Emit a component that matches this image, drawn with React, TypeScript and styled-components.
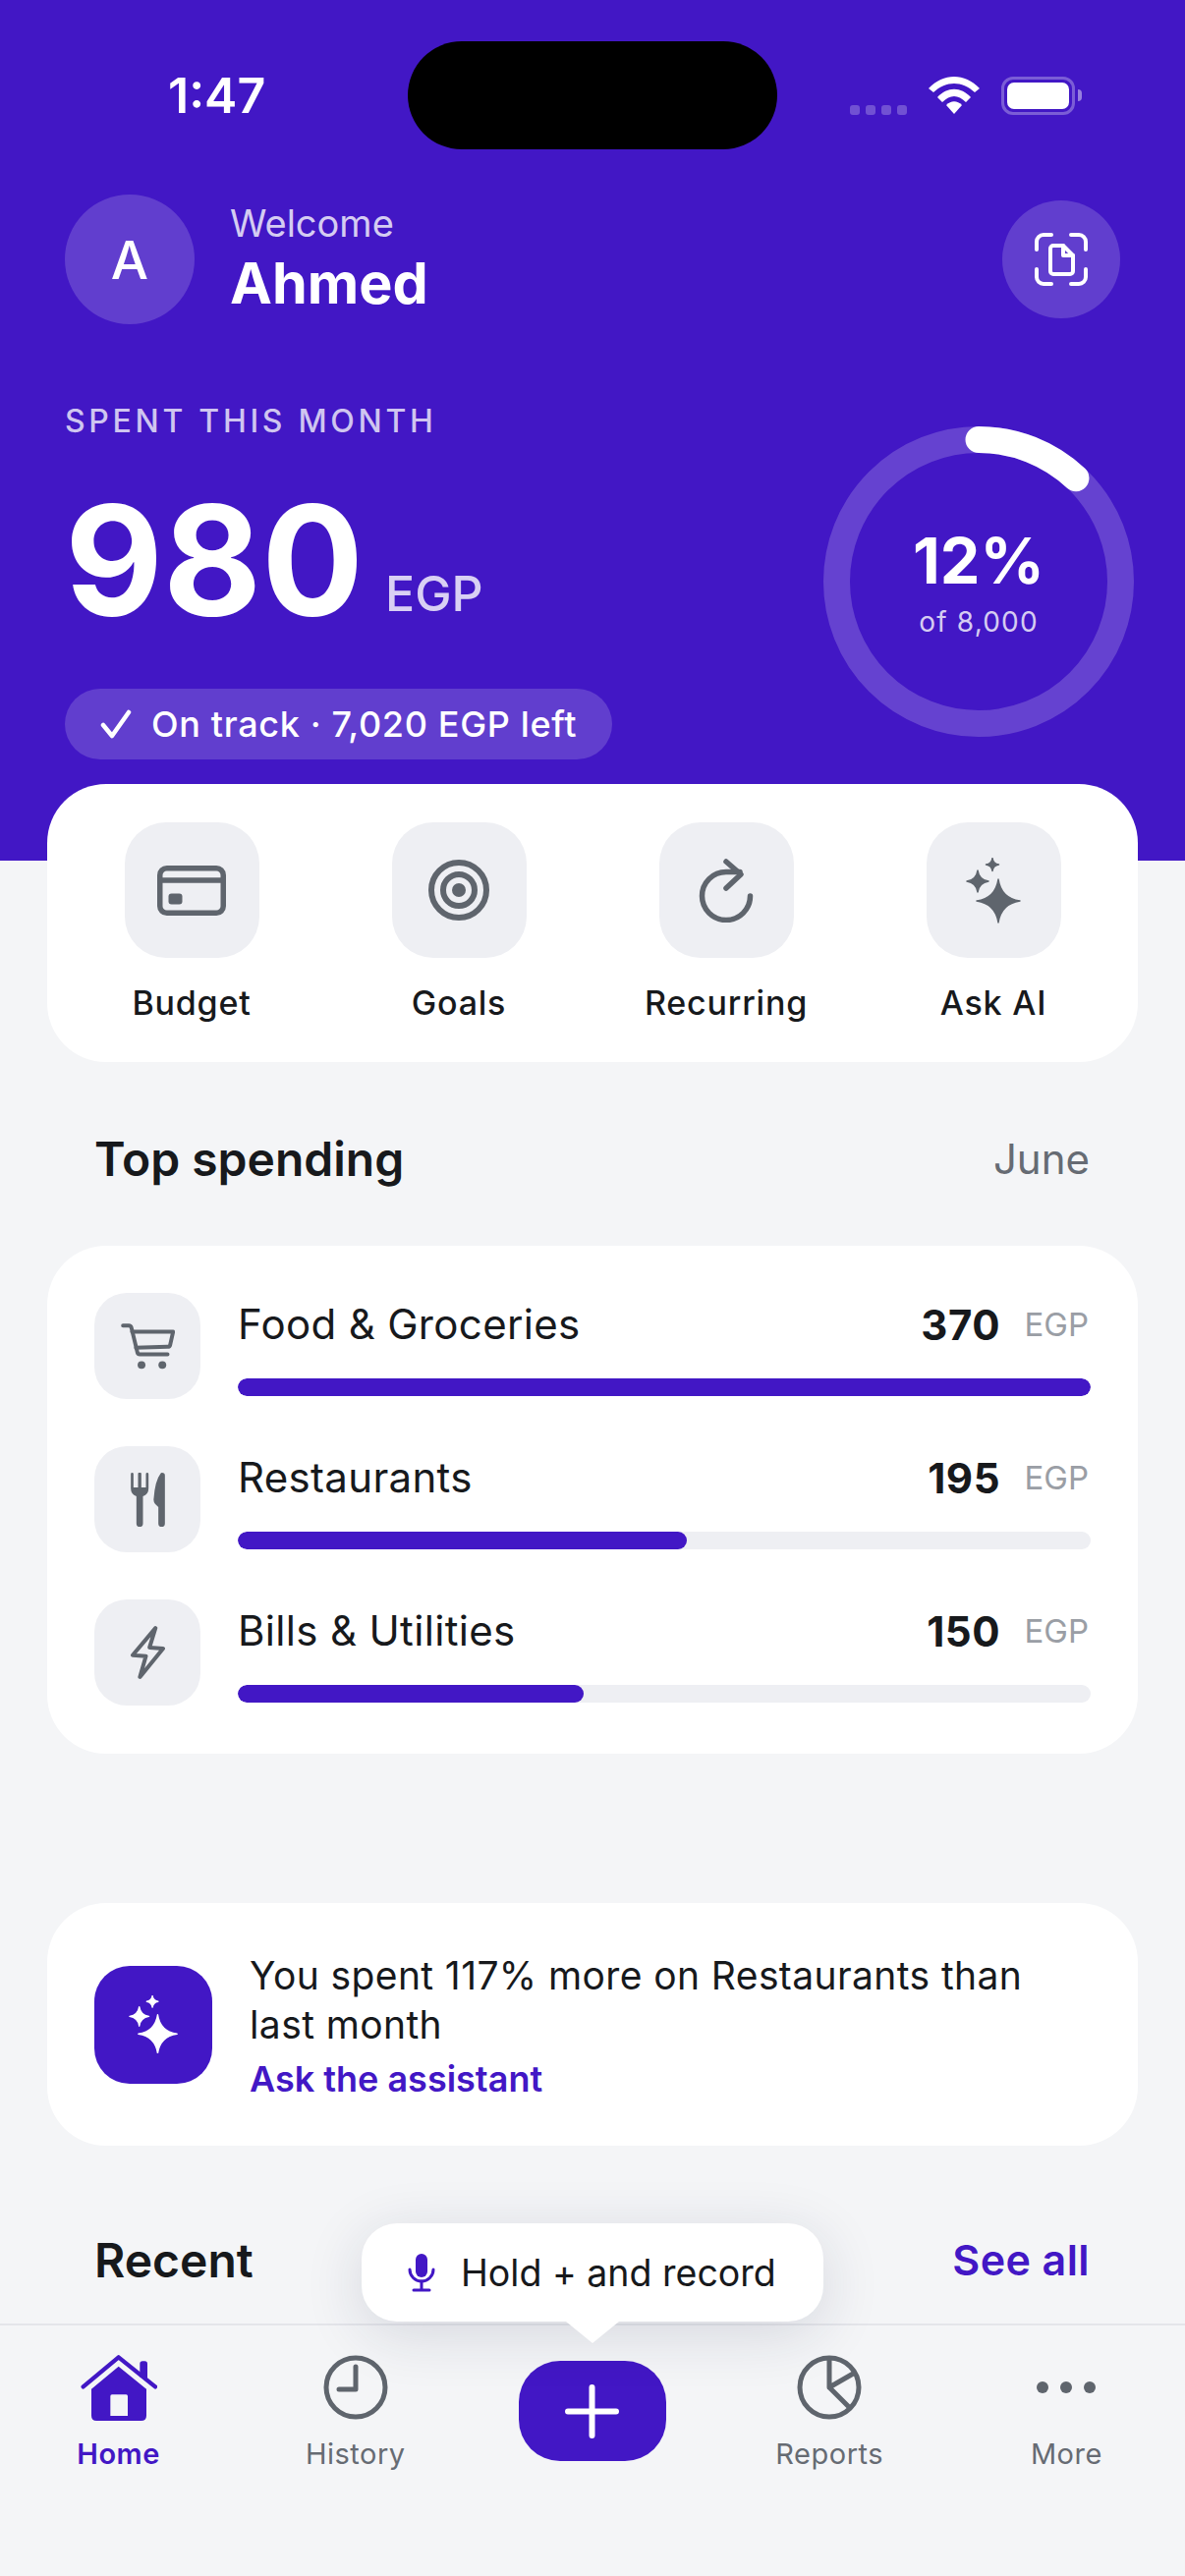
import React from "react"
import styled, { createGlobalStyle } from "styled-components"

const PURPLE = "#4217c5"
const GREY_ICON = "#5f656d"

const GlobalStyle = createGlobalStyle`
  html, body {
    margin: 0;
    padding: 0;
    background: #f4f5f7;
  }
  * {
    box-sizing: border-box;
  }
`

const spending = [
  { name: "Food & Groceries", amount: 370, pct: 100, icon: "cart" },
  { name: "Restaurants", amount: 195, pct: 52.7, icon: "fork" },
  { name: "Bills & Utilities", amount: 150, pct: 40.5, icon: "bolt" },
]

// four pointed star, concave sides
const star = (cx: number, cy: number, r: number) => {
  const k = r * 0.13
  return (
    `M${cx} ${cy - r}Q${cx + k} ${cy - k} ${cx + r} ${cy}` +
    `Q${cx + k} ${cy + k} ${cx} ${cy + r}` +
    `Q${cx - k} ${cy + k} ${cx - r} ${cy}` +
    `Q${cx - k} ${cy - k} ${cx} ${cy - r}Z`
  )
}

const Sparkles: React.FC<{ width: number; color: string }> = ({ width, color }) => (
  <svg width={width} height={(width * 67) / 56} viewBox="0 0 56 67" fill={color} stroke={color} strokeWidth="1.500" strokeLinejoin="round">
    <path d={star(33, 44, 22)} />
    <path d={star(12, 24, 11)} />
    <path d={star(27, 7, 6.5)} />
  </svg>
)

const RowIcon: React.FC<{ name: string }> = ({ name }) => {
  if (name === "cart") {
    return (
      <svg width="55" height="47" viewBox="0 0 165 142" fill="none" stroke={GREY_ICON} strokeWidth="12" strokeLinecap="round" strokeLinejoin="round">
        <path d="M6 7H24Q30 7 32 14L50 88Q51 95 58 95H143" />
        <path d="M34 26H160L151 66Q150 72 143 72L46 75" />
        <circle cx="63" cy="128" r="12" fill={GREY_ICON} stroke="none" />
        <circle cx="127" cy="128" r="12" fill={GREY_ICON} stroke="none" />
      </svg>
    )
  }
  if (name === "fork") {
    return (
      <svg width="35" height="55" viewBox="0 0 104 165" fill={GREY_ICON}>
        <path d="M0 4V48Q0 66 17 72V155a10 10 0 0 0 20 0V72Q54 66 54 48V4a4 4 0 0 0-8 0V45H32V4a5 5 0 0 0-10 0V45H8V4a4 4 0 0 0-8 0Z" />
        <path d="M95 0Q104 0 104 8V155a10 10 0 0 1-20 0V105L74 95Q68 88 70 78Q74 25 90 4Q92 0 95 0Z" />
      </svg>
    )
  }
  return (
    <svg width="35" height="54" viewBox="0 0 104 160" fill="none" stroke={GREY_ICON} strokeWidth="12" strokeLinejoin="round" strokeLinecap="round">
      <path d="M75 6L6 88L46 91L28 154L98 68L57 65Z" />
    </svg>
  )
}

const App: React.FC = () => (
  <Screen>
    <GlobalStyle />
    <Scroll>
      <Header>
        <StatusBar>
          <Clock>1:47</Clock>
          <Island />
          <StatusIcons>
            <SignalDots>
              <Dot />
              <Dot />
              <Dot />
              <Dot />
            </SignalDots>
            <svg width="52" height="38" viewBox="0 0 52 38" fill="#fff">
              <path d="M0 12 C15 -4 37 -4 52 12 L47 16 C34 4 18 4 5 16Z" />
              <path d="M9 21 C19 10 33 10 43 21 L38 26 C30 18 22 18 14 26Z" />
              <path d="M18 29 C23 24 29 24 34 29 L26 38Z" />
            </svg>
            <Battery>
              <BatteryFill />
            </Battery>
            <BatteryCap />
          </StatusIcons>
        </StatusBar>

        <ProfileRow>
          <Avatar>A</Avatar>
          <Greeting>
            <Welcome>Welcome</Welcome>
            <UserName>Ahmed</UserName>
          </Greeting>
          <ScanButton>
            <svg width="54" height="54" viewBox="0 0 54 54" fill="none" stroke="#fff" strokeWidth="4" strokeLinecap="round" strokeLinejoin="round">
              <path d="M2 17V9a7 7 0 0 1 7-7h8" />
              <path d="M37 2h8a7 7 0 0 1 7 7v8" />
              <path d="M2 37v8a7 7 0 0 0 7 7h8" />
              <path d="M37 52h8a7 7 0 0 0 7-7v-8" />
              <path d="M16 16a3 3 0 0 1 3-3h10l10 10v16a3 3 0 0 1-3 3H19a3 3 0 0 1-3-3z" />
              <path d="M29 13v10h10" />
            </svg>
          </ScanButton>
        </ProfileRow>

        <SummaryRow>
          <SummaryText>
            <Eyebrow>SPENT THIS MONTH</Eyebrow>
            <AmountRow>
              <Amount>980</Amount>
              <Currency>EGP</Currency>
            </AmountRow>
            <StatusPill>
              <svg width="32" height="30" viewBox="0 0 32 30" fill="none" stroke="#fff" strokeWidth="4.500" strokeLinecap="round" strokeLinejoin="round">
                <path d="M3 16l9 11L29 3" />
              </svg>
              On track · 7,020 EGP left
            </StatusPill>
          </SummaryText>
          <Ring>
            <svg width="316" height="316" viewBox="0 0 316 316" fill="none">
              <circle cx="158" cy="158" r="144.500" stroke="#ffffff" strokeOpacity="0.19" strokeWidth="27" />
              <circle
                cx="158"
                cy="158"
                r="144.500"
                stroke="#fff"
                strokeWidth="27"
                strokeLinecap="round"
                strokeDasharray={`${2 * Math.PI * 144.5 * 0.12} ${2 * Math.PI * 144.5}`}
                transform="rotate(-90 158 158)"
              />
            </svg>
            <RingLabel>
              <RingPct>12%</RingPct>
              <RingSub>of 8,000</RingSub>
            </RingLabel>
          </Ring>
        </SummaryRow>
      </Header>

      <Content>
        <ActionsCard>
          <Action>
            <ActionTile>
              <svg width="70" height="51" viewBox="0 0 70 51" fill="none" stroke={GREY_ICON} strokeWidth="5.500">
                <rect x="2.750" y="2.750" width="64.500" height="45.500" rx="7" />
                <path d="M3 15h64" />
                <rect x="11.500" y="28.500" width="14" height="11" rx="3" fill={GREY_ICON} stroke="none" />
              </svg>
            </ActionTile>
            <ActionLabel>Budget</ActionLabel>
          </Action>
          <Action>
            <ActionTile>
              <svg width="62" height="62" viewBox="0 0 62 62" fill="none" stroke={GREY_ICON} strokeWidth="6">
                <circle cx="31" cy="31" r="28" />
                <circle cx="31" cy="31" r="16" />
                <circle cx="31" cy="31" r="7" fill={GREY_ICON} stroke="none" />
              </svg>
            </ActionTile>
            <ActionLabel>Goals</ActionLabel>
          </Action>
          <Action>
            <ActionTile>
              <svg width="58" height="66" viewBox="0 0 58 66" fill="none" stroke={GREY_ICON} strokeWidth="5.500" strokeLinecap="round" strokeLinejoin="round">
                <path d="M53.500 39A24.500 24.500 0 1 1 29 14.500H43" />
                <path d="M29 4L44 17L29 31" />
              </svg>
            </ActionTile>
            <ActionLabel>Recurring</ActionLabel>
          </Action>
          <Action>
            <ActionTile>
              <Sparkles width={56} color={GREY_ICON} />
            </ActionTile>
            <ActionLabel>Ask AI</ActionLabel>
          </Action>
        </ActionsCard>

        <SectionHeader>
          <SectionTitle>Top spending</SectionTitle>
          <SectionMeta>June</SectionMeta>
        </SectionHeader>

        <SpendingCard>
          {spending.map((item) => (
            <SpendRow key={item.name}>
              <RowTile>
                <RowIcon name={item.icon} />
              </RowTile>
              <RowBody>
                <RowTop>
                  <RowName>{item.name}</RowName>
                  <RowAmount>{item.amount}</RowAmount>
                  <RowCurrency>EGP</RowCurrency>
                </RowTop>
                <Track>
                  <Fill style={{ width: `${item.pct}%` }} />
                </Track>
              </RowBody>
            </SpendRow>
          ))}
        </SpendingCard>

        <InsightCard>
          <InsightTile>
            <Sparkles width={50} color="#fff" />
          </InsightTile>
          <InsightBody>
            <InsightText>You spent 117% more on Restaurants than last month</InsightText>
            <InsightLink>Ask the assistant</InsightLink>
          </InsightBody>
        </InsightCard>

        <RecentHeader>
          <SectionTitle>Recent</SectionTitle>
          <SeeAll>See all</SeeAll>
        </RecentHeader>
      </Content>
    </Scroll>

    <TabBar>
      <Hint>
        <svg width="30" height="40" viewBox="0 0 30 40" fill="none" stroke={PURPLE} strokeWidth="3" strokeLinecap="round">
          <rect x="9" y="1" width="12" height="24" rx="6" fill={PURPLE} stroke="none" />
          <path d="M3 17a12 12 0 0 0 24 0" />
          <path d="M15 29v9M7 38h16" />
        </svg>
        Hold + and record
      </Hint>
      <Tab>
        <TabIcon>
          <svg width="78" height="68" viewBox="0 0 234 204" fill="none">
            <path d="M8 100L116 10L228 100" stroke={PURPLE} strokeWidth="13" strokeLinecap="round" strokeLinejoin="round" />
            <path d="M181 70V30a8 8 0 0 1 8-8h7a8 8 0 0 1 8 8V80z" fill={PURPLE} />
            <path
              fillRule="evenodd"
              fill={PURPLE}
              d="M116 38L201 107V188Q201 204 185 204H49Q33 204 33 188V107ZM96 124Q91 124 91 129V189H144V129Q144 124 139 124Z"
            />
          </svg>
        </TabIcon>
        <TabLabel $active>Home</TabLabel>
      </Tab>
      <Tab>
        <TabIcon>
          <svg width="66" height="66" viewBox="0 0 66 66" fill="none" stroke={GREY_ICON} strokeWidth="5">
            <circle cx="33" cy="33" r="30" />
            <path d="M33 12V35H16" strokeLinecap="round" strokeLinejoin="round" />
          </svg>
        </TabIcon>
        <TabLabel>History</TabLabel>
      </Tab>
      <Tab>
        <PlusButton>
          <svg width="55" height="55" viewBox="0 0 55 55" stroke="#fff" strokeWidth="6" strokeLinecap="round">
            <path d="M27.500 3v49M3 27.500h49" />
          </svg>
        </PlusButton>
      </Tab>
      <Tab>
        <TabIcon>
          <svg width="66" height="66" viewBox="0 0 66 66" fill="none" stroke={GREY_ICON} strokeWidth="5" strokeLinejoin="round">
            <circle cx="33" cy="33" r="30" />
            <path d="M33 3V33L59 18M33 33L54 54" />
          </svg>
        </TabIcon>
        <TabLabel>Reports</TabLabel>
      </Tab>
      <Tab>
        <TabIcon>
          <svg width="60" height="12" viewBox="0 0 60 12" fill={GREY_ICON}>
            <circle cx="6" cy="6" r="6" />
            <circle cx="30" cy="6" r="6" />
            <circle cx="54" cy="6" r="6" />
          </svg>
        </TabIcon>
        <TabLabel>More</TabLabel>
      </Tab>
    </TabBar>
  </Screen>
)

export default App

const Screen = styled.div`
  width: 1206px;
  height: 2622px;
  display: flex;
  flex-direction: column;
  background: #f4f5f7;
  font-family: Inter, "Liberation Sans", sans-serif;
  color: #17191c;
  overflow: hidden;
`

const Scroll = styled.div`
  flex: 1;
  min-height: 0;
  overflow: hidden;
`

const Header = styled.div`
  height: 876px;
  background: ${PURPLE};
  color: #fff;
  padding: 42px 52px 0 66px;
`

const StatusBar = styled.div`
  height: 110px;
  display: flex;
  align-items: center;
`

const Clock = styled.div`
  width: 349px;
  padding-left: 105px;
  font-size: 50px;
  font-weight: 600;
  line-height: 1;
`

const Island = styled.div`
  width: 376px;
  height: 110px;
  border-radius: 55px;
  background: #000;
`

const StatusIcons = styled.div`
  margin-left: 74px;
  display: flex;
  align-items: center;
`

const SignalDots = styled.div`
  display: flex;
  gap: 6px;
  align-self: flex-end;
  margin-right: 22px;
`

const Dot = styled.span`
  width: 10px;
  height: 10px;
  border-radius: 3px;
  background: rgba(255, 255, 255, 0.25);
`

const Battery = styled.div`
  width: 75px;
  height: 39px;
  margin-left: 22px;
  padding: 3px;
  border: 3px solid rgba(255, 255, 255, 0.3);
  border-radius: 12px;
`

const BatteryFill = styled.div`
  width: 100%;
  height: 100%;
  border-radius: 7px;
  background: #fff;
`

const BatteryCap = styled.div`
  width: 4px;
  height: 12px;
  margin-left: 3px;
  border-radius: 0 4px 4px 0;
  background: rgba(255, 255, 255, 0.45);
`

const ProfileRow = styled.div`
  margin-top: 46px;
  height: 132px;
  display: flex;
  align-items: center;
`

const Avatar = styled.div`
  width: 132px;
  height: 132px;
  border-radius: 50%;
  background: rgba(255, 255, 255, 0.17);
  display: flex;
  align-items: center;
  justify-content: center;
  font-size: 54px;
  font-weight: 500;
`

const Greeting = styled.div`
  flex: 1;
  margin-left: 36px;
`

const Welcome = styled.div`
  font-size: 38px;
  line-height: 48px;
  color: rgba(255, 255, 255, 0.8);
`

const UserName = styled.div`
  font-size: 57.500px;
  line-height: 74px;
  font-weight: 700;
`

const ScanButton = styled.div`
  width: 120px;
  height: 120px;
  margin-right: 14px;
  border-radius: 50%;
  background: rgba(255, 255, 255, 0.17);
  display: flex;
  align-items: center;
  justify-content: center;
`

const SummaryRow = styled.div`
  margin-top: 79px;
  display: flex;
  justify-content: space-between;
  align-items: flex-start;
`

const SummaryText = styled.div`
  display: flex;
  flex-direction: column;
  align-items: flex-start;
`

const Eyebrow = styled.div`
  font-size: 32px;
  line-height: 40px;
  font-weight: 500;
  letter-spacing: 3.700px;
  color: rgba(255, 255, 255, 0.75);
`

const AmountRow = styled.div`
  margin-top: 36px;
  display: flex;
  align-items: flex-end;
  height: 170px;
`

const Amount = styled.div`
  font-size: 154px;
  line-height: 170px;
  font-weight: 700;
`

const Currency = styled.div`
  margin-left: 22px;
  margin-bottom: 26px;
  font-size: 50px;
  line-height: 50px;
  font-weight: 500;
  color: rgba(255, 255, 255, 0.8);
`

const StatusPill = styled.div`
  margin-top: 46px;
  height: 72px;
  padding: 0 36px;
  border-radius: 36px;
  background: rgba(255, 255, 255, 0.17);
  display: flex;
  align-items: center;
  gap: 20px;
  font-size: 36px;
  font-weight: 500;
  letter-spacing: 0.660px;
`

const Ring = styled.div`
  position: relative;
  width: 316px;
  height: 316px;
  margin-top: 25px;
`

const RingLabel = styled.div`
  position: absolute;
  inset: 0;
  display: flex;
  flex-direction: column;
  align-items: center;
  justify-content: center;
`

const RingPct = styled.div`
  font-size: 64.500px;
  line-height: 76px;
  font-weight: 700;
`

const RingSub = styled.div`
  margin-top: 6px;
  font-size: 28px;
  line-height: 36px;
  letter-spacing: 1.200px;
  color: rgba(255, 255, 255, 0.8);
`

const Content = styled.div`
  padding: 0 48px;
`

const Card = styled.div`
  background: #fff;
  border-radius: 60px;
`

const ActionsCard = styled(Card)`
  margin-top: -78px;
  height: 283px;
  padding: 39px 11px 0;
  display: grid;
  grid-template-columns: repeat(4, 1fr);
`

const Action = styled.div`
  display: flex;
  flex-direction: column;
  align-items: center;
`

const ActionTile = styled.div`
  width: 137px;
  height: 138px;
  border-radius: 42px;
  background: #eeeff3;
  display: flex;
  align-items: center;
  justify-content: center;
`

const ActionLabel = styled.div`
  margin-top: 25px;
  font-size: 34px;
  line-height: 42px;
  font-weight: 550;
  letter-spacing: 0.800px;
`

const SectionHeader = styled.div`
  margin-top: 66px;
  padding: 0 49px 0 48px;
  height: 64px;
  display: flex;
  align-items: center;
  justify-content: space-between;
`

const SectionTitle = styled.div`
  font-size: 48px;
  font-weight: 600;
`

const SectionMeta = styled.div`
  font-size: 42px;
  color: #666b73;
`

const SpendingCard = styled(Card)`
  margin-top: 57px;
  height: 517px;
  padding: 48px 48px 0;
  display: flex;
  flex-direction: column;
  gap: 48px;
`

const SpendRow = styled.div`
  display: flex;
  height: 108px;
`

const RowTile = styled.div`
  width: 108px;
  height: 108px;
  flex: none;
  border-radius: 33px;
  background: #eeeff3;
  display: flex;
  align-items: center;
  justify-content: center;
`

const RowBody = styled.div`
  flex: 1;
  margin-left: 38px;
  display: flex;
  flex-direction: column;
  justify-content: space-between;
  padding-bottom: 3px;
`

const RowTop = styled.div`
  display: flex;
  align-items: center;
`

const RowName = styled.div`
  flex: 1;
  font-size: 42px;
  line-height: 64px;
  letter-spacing: 0.330px;
`

const RowAmount = styled.div`
  font-size: 42px;
  font-weight: 700;
  letter-spacing: 0.500px;
`

const RowCurrency = styled.div`
  width: 92px;
  padding-right: 2px;
  text-align: right;
  font-size: 33px;
  color: #9a9ea5;
`

const Track = styled.div`
  height: 18px;
  border-radius: 9px;
  background: #eeeff3;
  overflow: hidden;
`

const Fill = styled.div`
  height: 100%;
  border-radius: 9px;
  background: ${PURPLE};
`

const InsightCard = styled(Card)`
  margin-top: 152px;
  height: 247px;
  padding: 0 48px;
  display: flex;
  align-items: center;
`

const InsightTile = styled.div`
  width: 120px;
  height: 120px;
  flex: none;
  border-radius: 36px;
  background: ${PURPLE};
  display: flex;
  align-items: center;
  justify-content: center;
`

const InsightBody = styled.div`
  margin-left: 38px;
  padding-top: 3px;
  max-width: 800px;
`

const InsightText = styled.div`
  font-size: 39px;
  line-height: 50px;
  letter-spacing: 0.400px;
`

const InsightLink = styled.div`
  margin-top: 7px;
  font-size: 36px;
  line-height: 46px;
  font-weight: 600;
  color: ${PURPLE};
`

const RecentHeader = styled(SectionHeader)`
  margin-top: 84px;
`

const SeeAll = styled.div`
  font-size: 43px;
  font-weight: 600;
  letter-spacing: 0.400px;
  color: ${PURPLE};
`

const TabBar = styled.div`
  position: relative;
  flex: none;
  height: 257px;
  border-top: 2px solid #e4e5ea;
  background: #f4f5f7;
  display: grid;
  grid-template-columns: repeat(5, 1fr);
`

const Tab = styled.div`
  display: flex;
  flex-direction: column;
  align-items: center;
  padding-top: 27px;
`

const TabIcon = styled.div`
  height: 72px;
  display: flex;
  align-items: center;
  justify-content: center;
`

const TabLabel = styled.div<{ $active?: boolean }>`
  margin-top: 12px;
  font-size: 29px;
  line-height: 40px;
  letter-spacing: 0.500px;
  font-weight: ${({ $active }) => ($active ? 600 : 400)};
  color: ${({ $active }) => ($active ? PURPLE : "#666b73")};
`

const PlusButton = styled.div`
  width: 150px;
  height: 102px;
  margin-top: 9px;
  border-radius: 42px;
  background: ${PURPLE};
  display: flex;
  align-items: center;
  justify-content: center;
`

const Hint = styled.div`
  position: absolute;
  left: 368px;
  top: -104px;
  width: 470px;
  height: 100px;
  border-radius: 36px;
  background: #fff;
  box-shadow: 0 12px 60px rgba(30, 35, 70, 0.14);
  display: flex;
  align-items: center;
  gap: 25px;
  padding-left: 46px;
  font-size: 37.500px;
  z-index: 2;

  &::after {
    content: "";
    position: absolute;
    left: 50%;
    top: 100%;
    width: 54px;
    height: 22px;
    transform: translateX(-50%);
    background: #fff;
    clip-path: polygon(0 0, 100% 0, 50% 100%);
  }
`
